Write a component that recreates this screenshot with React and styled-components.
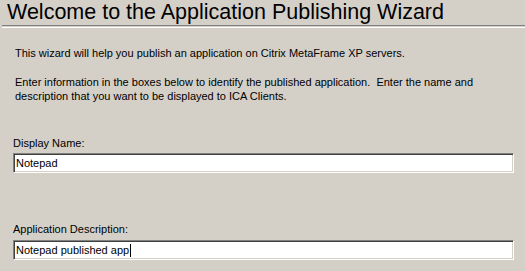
import React from 'react';
import styled, { createGlobalStyle } from 'styled-components';

const GlobalStyle = createGlobalStyle`
  html, body {
    margin: 0;
    padding: 0;
    background: #d4d0c8;
  }
`;

const Page = styled.div`
  width: 525px;
  height: 271px;
  overflow: hidden;
  background: #d4d0c8;
  font-family: 'Liberation Sans', Arial, sans-serif;
  color: #000;
  display: flex;
  flex-direction: column;
`;

const Title = styled.h1`
  margin: 0;
  padding: 1px 0 0 7px;
  font-size: 21.5px;
  line-height: 23px;
  font-weight: normal;
  white-space: nowrap;
`;

// etched separator under the title
const Divider = styled.div`
  margin: 1px 0 0 2px;
  height: 1px;
  border-top: 1px solid #808080;
  border-bottom: 1px solid #ffffff;
`;

const Body = styled.div`
  display: flex;
  flex-direction: column;
  padding: 18px 11px 0 13px;
  font-size: 11px;
  line-height: 14px;
`;

const Text = styled.p`
  margin: ${(p) => p.$top || 0}px 0 0 2px;
`;

const Field = styled.div`
  display: flex;
  flex-direction: column;
  margin-top: ${(p) => p.$top}px;
`;

const Label = styled.label`
  line-height: 14px;
`;

const Box = styled.div`
  margin-top: ${(p) => p.$gap}px;
  height: 16px;
  background: #fff;
  border-top: 1px solid #808080;
  border-left: 1px solid #808080;
  border-bottom: 1px solid #ffffff;
  border-right: 1px solid #ffffff;
  box-shadow: inset 1px 1px 0 #404040, inset -1px -1px 0 #d4d0c8;
  padding: 1px 2px;
  display: flex;
  align-items: center;
  font-size: 11px;
  white-space: nowrap;
`;

const Caret = styled.span`
  display: inline-block;
  width: 1px;
  height: 13px;
  background: #000;
  margin-left: 1px;
`;

export default function App() {
  return (
    <Page>
      <GlobalStyle />
      <Title>Welcome to the Application Publishing Wizard</Title>
      <Divider />
      <Body>
        <Text>This wizard will help you publish an application on Citrix MetaFrame XP servers.</Text>
        <Text $top={15}>
          Enter information in the boxes below to identify the published application.&nbsp; Enter the name and
          <br />
          description that you want to be displayed to ICA Clients.
        </Text>
        <Field $top={33}>
          <Label>Display Name:</Label>
          <Box $gap={3}>Notepad</Box>
        </Field>
        <Field $top={49}>
          <Label>Application Description:</Label>
          <Box $gap={4}>
            Notepad published app
            <Caret />
          </Box>
        </Field>
      </Body>
    </Page>
  );
}
